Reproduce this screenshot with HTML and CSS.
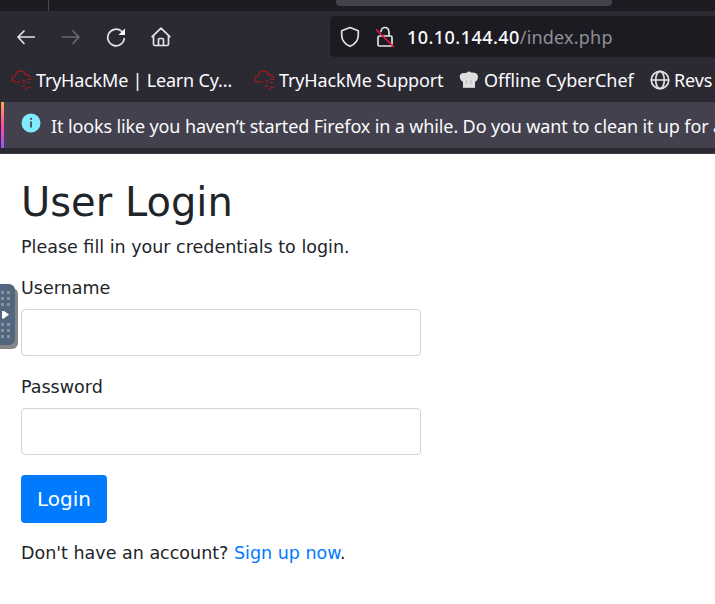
FILE: index.html
```html
<!DOCTYPE html>
<html lang="en">
<head>
<meta charset="utf-8">
<title>Login</title>
<link rel="stylesheet" href="styles.css">
</head>
<body>
<svg class="defs" width="0" height="0" aria-hidden="true">
  <symbol id="cloud" viewBox="0 0 20 20">
    <g fill="none" stroke="#a5191d" stroke-width="1.2">
      <path d="M9 12H3.500Q.8 11.500 1 8.800Q1.400 6 4.500 6Q5 1 9.500 .9Q13.500 1 14.500 5Q18.500 4.500 19.300 8"/>
      <path stroke-width="1" d="M11 10.500h3M16 9.500h4M12 12.500h2M16 12.500h3M10.500 16h4M16.500 17.500h3.500M14 19h3"/>
    </g>
  </symbol>
</svg>
<header class="browser">
  <div class="tabs"><div class="separator"></div><div class="tab"></div></div>
  <div class="toolbar">
    <nav class="nav">
      <svg width="20" height="20" viewBox="0 0 20 20" class="line"><path d="M18.300 10H2M8 4L2 10l6 6.500"/></svg>
      <svg width="20" height="20" viewBox="0 0 20 20" class="line dim"><path d="M1.500 10H18M12 4l6 6-6 6.500"/></svg>
      <svg width="20" height="20" viewBox="0 0 20 20" class="line"><path d="M18.300 11.500A8.300 8.300 0 1 1 15.500 4.200"/><path class="solid" d="M19 1.500v6.500h-6.500z"/></svg>
      <svg width="20" height="20" viewBox="0 0 20 20" class="line"><path d="M1.200 9.700L10 1.200l8.800 8.500M2.500 8.500V17q0 1.500 1.500 1.500h12Q17.500 18.500 17.500 17V8.500M7.500 18.500v-6q0-1 1-1h3q1 0 1 1v6"/></svg>
    </nav>
    <div class="address">
      <svg class="line shield" width="20" height="22" viewBox="0 0 20 22"><path d="M10 1.500l8.300 3.200v4.500Q18 17 10 20.300Q2 17 1.700 9.200V4.700z"/></svg>
      <svg class="line lock" width="20" height="22" viewBox="0 0 20 22"><path d="M6 5.500Q6.500 1.500 10 1.500T14 6v4M4.500 10h11q1.500 0 1.500 1.500v7q0 1.500-1.500 1.500h-11Q3 20 3 18.500v-7Q3 10 4.500 10z"/><path class="cut" d="M1.500 4l17 16.500"/></svg>
      <span class="url"><b>10.10.144.40</b><span>/index.php</span></span>
    </div>
  </div>
  <div class="bookmarks">
    <svg width="20" height="20" class="bm1"><use href="#cloud"/></svg><span class="t1">TryHackMe | Learn Cy…</span>
    <svg width="20" height="20" class="bm2"><use href="#cloud"/></svg><span class="t2">TryHackMe Support</span>
    <svg width="20" height="20" viewBox="0 0 20 20" class="bm3"><path fill="#dedede" d="M4 18V12Q1 10.500 .7 7Q.7 3 5 3Q7 3 8 2.500Q10 .5 12 2.500Q18.500 2 19 6.500Q19 10.500 16 12v6z"/><path stroke="#bbb" d="M4 17.500h12M7.500 10v4M12 10v4"/></svg><span class="t3">Offline CyberChef</span>
    <svg width="20" height="20" viewBox="0 0 20 20" class="line bm4"><circle cx="10" cy="10" r="8.700"/><ellipse cx="10" cy="10" rx="4.300" ry="8.700"/><path d="M1.500 10h17"/></svg><span class="t4">Revs</span>
  </div>
  <div class="notice">
    <svg width="20" height="20" viewBox="0 0 20 20"><circle cx="10" cy="10" r="9.500" fill="#80ebff"/><path d="M10 8.500v6" stroke="#42414d" stroke-width="1.700"/><circle cx="10" cy="5.800" r="1.100" fill="#42414d"/></svg>
    <span>It looks like you haven’t started Firefox in a while. Do you want to clean it up for a</span>
  </div>
</header>
<main class="login">
  <h2>User Login</h2>
  <p>Please fill in your credentials to login.</p>
  <form>
    <label for="user">Username</label>
    <input id="user" type="text">
    <label for="pass">Password</label>
    <input id="pass" type="password">
    <button type="button">Login</button>
    <p class="signup">Don't have an account? <a href="#">Sign up now</a>.</p>
  </form>
</main>
<div class="handle">
  <svg width="16" height="61" viewBox="0 0 16 61"><path class="dots" d="M1 8.500h9M1 14.500h9M1 20.500h9M1 40.500h9M1 46.500h9M1 52.500h9"/><path fill="#fff" d="M2 27h2l5 3.500-5 4H2z"/></svg>
</div>
</body>
</html>
```
FILE: styles.css
```css
* { box-sizing: border-box; }
body { margin: 0; width: 715px; height: 604px; overflow: hidden; background: #fff; color: #212529; font: 17.5px/26px "DejaVu Sans", sans-serif; }
svg { display: block; flex: none; }
.defs { position: absolute; }
.browser { height: 154px; background: #2b2a33; color: #fbfbfe; font-family: "Noto Sans", sans-serif; overflow: hidden; border-bottom: 1px solid #3c3b42; }
.tabs { display: flex; height: 11px; background: #1c1b22; }
.separator { width: 1px; margin-left: 48px; background: #4b4a52; }
.tab { width: 276px; height: 6px; margin-left: 287px; background: #42414d; border-radius: 0 0 4px 4px; }
.toolbar { display: flex; height: 51px; padding-top: 5px; }
.nav { display: flex; gap: 25px; width: 330px; padding: 11px 0 0 16px; }
.line { fill: none; stroke: #e3e3e7; stroke-width: 1.7; stroke-linejoin: round; stroke-linecap: round; }
.dim { stroke: #69686f; }
.solid { fill: #fbfbfe; stroke: none; }
.address { display: flex; align-items: center; flex: 1; height: 41px; padding-left: 10px; background: #1c1b22; border-radius: 5px 0 0 5px; }
.lock { margin-left: 15px; }
.cut { stroke: #e2173f; }
.url { margin-left: 12px; font-size: 18px; white-space: nowrap; color: #8f8f98; letter-spacing: .2px; }
.url b { font-weight: 500; color: #fbfbfe; letter-spacing: .45px; }
.bookmarks { display: flex; align-items: center; height: 40px; padding: 0 0 4px 11px; font-size: 18px; white-space: nowrap; }
.bookmarks span { flex: none; margin-left: 5px; }
.bookmarks .t1 { width: 218px; letter-spacing: -.2px; }
.bookmarks .t2 { width: 180px; letter-spacing: -.12px; }
.bookmarks .t3 { width: 166px; }
.bookmarks .t4 { margin-left: 4px; letter-spacing: -.1px; }
.notice { display: flex; align-items: center; height: 46px; padding-left: 16px; background: #42414d; border-left: 3px solid; border-image: linear-gradient(#ffad4f, #ff4aa2 50%, #9059ff) 1; margin: 0 0 0 1px; font-size: 18px; letter-spacing: -.13px; white-space: nowrap; }
.notice span { padding-top: 1px; }
.notice svg { margin: -5px 10px 0 1px; }
.login { width: 421px; padding: 24px 0 0 21px; }
h2 { margin: 0 0 8px; font-size: 40px; line-height: 48px; font-weight: 400; }
p { margin: 0 0 15px; white-space: nowrap; }
form { display: flex; flex-direction: column; align-items: flex-start; }
label { margin-bottom: 8px; }
input { width: 400px; height: 47px; margin: 0 0 18px; border: 1px solid #ced4da; border-radius: 4px; background: #fff; }
#pass { margin-bottom: 20px; }
button { width: 86px; height: 48px; padding: 0; margin: 0 0 17px; border: 0; border-radius: 4px; background: #007bff; color: #fff; font: 20px "DejaVu Sans", sans-serif; }
a { color: #007bff; text-decoration: none; }
.handle { position: absolute; left: 0; top: 284px; width: 15px; height: 61px; background: #54657e; border-radius: 0 6px 6px 0; box-shadow: 3px 4px 0 #858585, 0 4px 0 #858585; }
.dots { fill: none; stroke: #8492a7; stroke-width: 3; stroke-dasharray: 3 3; }
```
